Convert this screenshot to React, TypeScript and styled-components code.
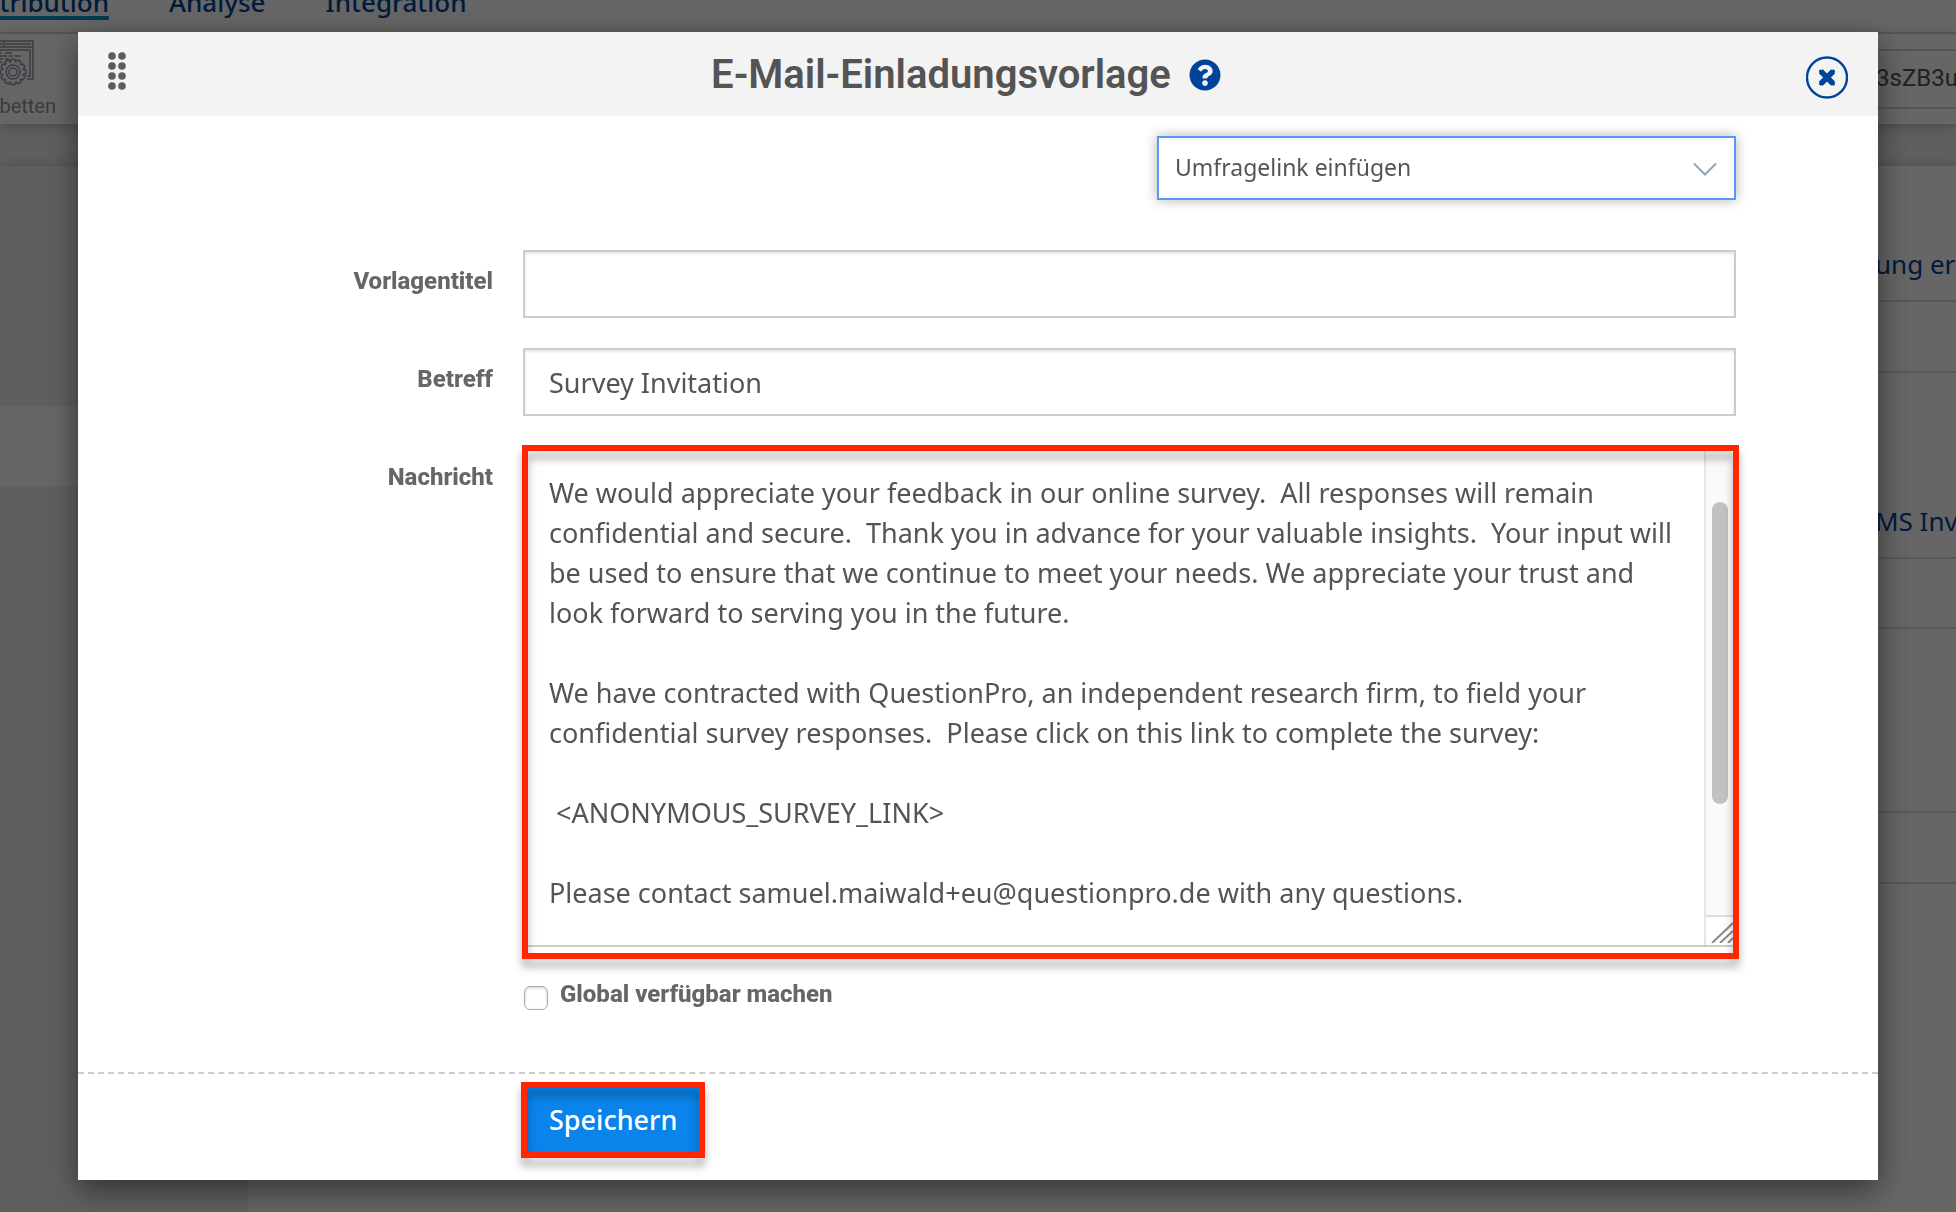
import React, { useId } from "react";
import styled, { createGlobalStyle } from "styled-components";
import { FaQuestionCircle } from "react-icons/fa";

const GlobalStyle = createGlobalStyle`
  *, *::before, *::after { box-sizing: border-box; }
  body {
    margin: 0;
    overflow: hidden;
    background: #eee;
    color: #545454;
    font-family: "Noto Sans", "Open Sans", sans-serif;
    font-weight: 450;
  }
  button, input, select, textarea { font: inherit; color: inherit; }
`;

const navy = "#004499";
const red = "#ff2600";

/* ---------- page behind the dialog ---------- */

const Page = styled.div`
  display: flex;
  flex-direction: column;
  height: 100vh;
  overflow: hidden;
`;

const Nav = styled.nav`
  flex: none;
  display: flex;
  gap: 60px;
  height: 50px;
  margin-top: -16px;
  background: #fff;
  border-bottom: 2px solid #e0e0e0;
`;

const Tab = styled.a<{ $active?: boolean }>`
  display: flex;
  justify-content: flex-end;
  width: ${(p) => (p.$active ? "109px" : "auto")};
  height: 36px;
  overflow: hidden;
  border-bottom: ${(p) => (p.$active ? "4px solid #0095c8" : "0")};
  color: ${navy};
  font-size: 26px;
  font-weight: 500;
  line-height: 36px;
  text-decoration: none;
`;

const Toolbar = styled.div`
  position: relative;
  flex: none;
  display: flex;
  justify-content: space-between;
  align-items: center;
  height: 90px;
  background: #fff;
  box-shadow: 0 2px 12px rgba(0, 0, 0, 0.25);
`;

const Tool = styled.button`
  display: flex;
  flex-direction: column;
  align-items: flex-end;
  gap: 8px;
  width: 56px;
  height: 78px;
  padding: 0;
  overflow: hidden;
  border: 0;
  background: none;
  color: #8f96a3;
  font-family: Roboto, sans-serif;
  font-size: 20px;
  line-height: 24px;

  svg { margin-right: 22px; flex: none; }
`;

const UrlBox = styled.input`
  width: 96px;
  height: 60px;
  padding: 0 0 2px 14px;
  border: 2px solid #d4d4d4;
  border-right: 0;
  background: #fff;
  font-family: Roboto, sans-serif;
  font-size: 24px;
`;

const Body = styled.div`
  flex: 1;
  display: flex;
  margin-top: 42px;
  box-shadow: 0 0 12px rgba(0, 0, 0, 0.2);
`;

const Sidebar = styled.aside`
  width: 248px;
  padding-top: 240px;
  background: #eee;
`;

const SidebarCurrent = styled.div`
  height: 80px;
  background: #fff;
`;

const Panel = styled.main`
  flex: 1;
  display: flex;
  justify-content: flex-end;
  background: #fff;
`;

const List = styled.div`
  width: 96px;
  overflow: hidden;
`;

const ListRow = styled.div<{ $height: number }>`
  display: flex;
  align-items: flex-end;
  height: ${(p) => p.$height}px;
  padding: 0 0 18px 15px;
  border-bottom: 2px solid #dcdcdc;
  color: ${navy};
  font-size: 26px;
  line-height: 36px;
  white-space: nowrap;
`;

/* ---------- dialog ---------- */

const Backdrop = styled.div`
  position: fixed;
  inset: 0;
  padding: 32px 78px;
  background: rgba(0, 0, 0, 0.6);
`;

const Dialog = styled.section`
  background: #fff;
  box-shadow: 0 10px 30px rgba(0, 0, 0, 0.5);
`;

const Header = styled.header`
  display: flex;
  align-items: center;
  height: 84px;
  padding: 0 30px;
  background: #f3f3f3;
`;

const DragHandle = styled.svg`
  flex: none;
  margin-bottom: 6px;
`;

const Title = styled.h1`
  flex: 1;
  display: flex;
  justify-content: center;
  align-items: center;
  gap: 18px;
  margin: 0;
  padding-top: 2px;
  font-family: Roboto, sans-serif;
  font-size: 40px;
  font-weight: 600;
  line-height: 48px;
`;

const IconButton = styled.button<{ $top?: number }>`
  flex: none;
  display: flex;
  margin-top: ${(p) => p.$top ?? 0}px;
  padding: 0;
  border: 0;
  background: none;
  color: ${navy};
  cursor: pointer;
`;

const Form = styled.form`
  padding-top: 20px;
`;

const Fields = styled.div`
  display: flex;
  flex-direction: column;
  gap: 30px;
  padding: 0 142px 62px 0;
`;

const SelectWrap = styled.div`
  position: relative;
  align-self: flex-end;
  width: 579px;
  margin-bottom: 20px;

  svg {
    position: absolute;
    right: 19px;
    top: 26px;
    pointer-events: none;
  }
`;

const Select = styled.select`
  appearance: none;
  display: block;
  width: 100%;
  height: 64px;
  padding: 0 60px 2px 16px;
  border: 2px solid #5897fb;
  border-radius: 0;
  outline: 0;
  background: #fff;
  box-shadow: 0 0 12px rgba(0, 0, 0, 0.3);
  font-size: 23px;
`;

const Field = styled.div`
  display: grid;
  grid-template-columns: 415px 1fr;
  column-gap: 30px;
`;

const Label = styled.label`
  color: #666;
  font-family: Roboto, sans-serif;
  font-size: 24px;
  font-weight: 800;
  line-height: 30px;
`;

const FieldLabel = styled(Label)`
  padding-top: 16px;
  text-align: right;
`;

const TextInput = styled.input`
  width: 100%;
  height: 68px;
  padding: 0 24px;
  border: 2px solid #ccc;
  outline: 0;
  background: #fff;
  box-shadow: inset 0 2px 3px rgba(0, 0, 0, 0.1);
  font-size: 27px;
`;

const Marked = styled.div<{ $frame: string }>`
  position: relative;

  &::after {
    content: "";
    position: absolute;
    inset: ${(p) => p.$frame};
    border: 6px solid ${red};
    filter: drop-shadow(0 8px 4px rgba(0, 0, 0, 0.3));
    pointer-events: none;
  }
`;

const MessageBox = styled.div`
  display: flex;
  height: 501px;
  border: 2px solid #ccc;
  background: #fff;
`;

const Message = styled.textarea`
  flex: 1;
  min-width: 0;
  padding: 25px 12px 0 24px;
  border: 0;
  outline: 0;
  overflow: hidden;
  resize: none;
  background: transparent;
  font-size: 27px;
  line-height: 40px;
`;

const ScrollColumn = styled.div`
  display: flex;
  flex-direction: column;
  width: 30px;
  border-left: 2px solid #e6e6e6;
  background: #fafafa;
`;

const ScrollTrack = styled.div`
  flex: 1;
  padding: 54px 6px 0;
`;

const ScrollThumb = styled.div`
  width: 16px;
  height: 302px;
  border-radius: 8px;
  background: #c1c1c1;
`;

const ResizeCorner = styled.div`
  height: 30px;
  padding: 4px 0 0 5px;
  border-top: 2px solid #dcdcdc;
  background: #fff;
`;

const CheckRow = styled.div`
  display: flex;
  gap: 12px;
  grid-column: 2;
  padding: 2px 0 0 1px;
`;

const Checkbox = styled.input`
  appearance: none;
  width: 24px;
  height: 24px;
  margin: 7px 0 0;
  border: 1px solid #adadad;
  border-radius: 6px;
  background: #fff;
  box-shadow: inset 0 1px 3px rgba(0, 0, 0, 0.2);
`;

const Footer = styled.footer`
  display: flex;
  padding: 10px 0 24px 445px;
  border-top: 2px dashed #ccc;
`;

const SaveButton = styled.button`
  display: block;
  height: 72px;
  padding: 0 26px 2px;
  border: 0;
  background: #0a84eb;
  color: #fff;
  font-size: 27px;
  font-weight: 500;
  cursor: pointer;
`;

const messageText = `We would appreciate your feedback in our online survey.  All responses will remain confidential and secure.  Thank you in advance for your valuable insights.  Your input will be used to ensure that we continue to meet your needs. We appreciate your trust and look forward to serving you in the future.

We have contracted with QuestionPro, an independent research firm, to field your confidential survey responses.  Please click on this link to complete the survey:

 <ANONYMOUS_SURVEY_LINK>

Please contact samuel.maiwald+eu@questionpro.de with any questions.`;

const teeth = Array.from({ length: 12 }, (_, i) => i * 30);

function EmbedIcon() {
  return (
    <svg width="34" height="46" viewBox="0 0 34 46" fill="none" stroke="currentColor" strokeWidth="1.5" aria-hidden="true">
      <path d="M-8 1H33V39H27M-8 7H33M-8 4H3M5 4H31M-8 10H30V36H27M4 1V7" />
      <path d="M-2 13H2M5 13H12M-2 16H7M9 16H13M15 16H21M-2 19H3M5 19H9M-2 22H2" />
      <g transform="translate(13 32)">
        {teeth.map((a) => (
          <path key={a} d="M-2.6-9.8L-1.8-12.8H1.8L2.6-9.8" transform={`rotate(${a})`} />
        ))}
        <circle r="7" />
        <circle r="4" />
      </g>
    </svg>
  );
}

function CloseIcon() {
  return (
    <svg width="42" height="43" viewBox="0 0 42 43" fill="none" stroke="currentColor" aria-hidden="true">
      <circle cx="21" cy="21.5" r="20" strokeWidth="2.4" />
      <path d="M14.8 15.3L27.2 27.7M27.2 15.3L14.8 27.7" strokeWidth="5.6" />
      <path d="M14.8 15.3L27.2 27.7M27.2 15.3L14.8 27.7" strokeWidth="3.6" strokeLinecap="round" />
    </svg>
  );
}

export default function App() {
  const id = useId();
  return (
    <>
      <GlobalStyle />
      <Page>
        <Nav>
          <Tab href="#distribution" $active>Distribution</Tab>
          <Tab href="#analyse">Analyse</Tab>
          <Tab href="#integration">Integration</Tab>
        </Nav>
        <Toolbar>
          <Tool type="button">
            <EmbedIcon />
            Einbetten
          </Tool>
          <UrlBox aria-label="Link" readOnly value="3sZB3ut" />
        </Toolbar>
        <Body>
          <Sidebar>
            <SidebarCurrent />
          </Sidebar>
          <Panel>
            <List>
              <ListRow $height={136}>ung erstellen</ListRow>
              <ListRow $height={71} />
              <ListRow $height={186}>MS Invitation</ListRow>
              <ListRow $height={70} />
              <ListRow $height={184} />
              <ListRow $height={71} />
            </List>
          </Panel>
        </Body>
      </Page>

      <Backdrop>
        <Dialog role="dialog" aria-modal="true" aria-labelledby={`${id}-title`}>
          <Header>
            <DragHandle width="18" height="38" viewBox="0 0 18 38" fill="#5c5c5c" aria-hidden="true">
              {[4, 14, 24, 34].map((y) => (
                <g key={y}>
                  <circle cx="4" cy={y} r="3.8" />
                  <circle cx="14" cy={y} r="3.8" />
                </g>
              ))}
            </DragHandle>
            <Title id={`${id}-title`}>
              E-Mail-Einladungsvorlage
              <IconButton type="button" aria-label="Hilfe">
                <FaQuestionCircle size={32} />
              </IconButton>
            </Title>
            <IconButton type="button" aria-label="Schließen" $top={7}>
              <CloseIcon />
            </IconButton>
          </Header>
          <Form onSubmit={(e) => e.preventDefault()}>
            <Fields>
              <SelectWrap>
                <Select aria-label="Umfragelink einfügen" defaultValue="link">
                  <option value="link">Umfragelink einfügen</option>
                </Select>
                <svg width="24" height="15" viewBox="0 0 24 15" fill="none" stroke="#8fa3bf" strokeWidth="2" aria-hidden="true">
                  <path d="M1 1.5L12 12.5L23 1.5" />
                </svg>
              </SelectWrap>
              <Field>
                <FieldLabel htmlFor={`${id}-name`}>Vorlagentitel</FieldLabel>
                <TextInput id={`${id}-name`} type="text" />
              </Field>
              <Field>
                <FieldLabel htmlFor={`${id}-subject`}>Betreff</FieldLabel>
                <TextInput id={`${id}-subject`} type="text" defaultValue="Survey Invitation" />
              </Field>
              <Field>
                <FieldLabel htmlFor={`${id}-message`}>Nachricht</FieldLabel>
                <Marked $frame="-1px -3px -12px -1px">
                  <MessageBox>
                    <Message id={`${id}-message`} defaultValue={messageText} spellCheck={false} />
                    <ScrollColumn>
                      <ScrollTrack>
                        <ScrollThumb />
                      </ScrollTrack>
                      <ResizeCorner>
                        <svg width="22" height="22" viewBox="0 0 22 22" stroke="#8a8a8a" strokeWidth="2" aria-hidden="true">
                          <path d="M1 22L22 2M9 22L22 10M17 22L22 17" />
                        </svg>
                      </ResizeCorner>
                    </ScrollColumn>
                  </MessageBox>
                </Marked>
              </Field>
              <Field>
                <CheckRow>
                  <Checkbox id={`${id}-global`} type="checkbox" />
                  <Label htmlFor={`${id}-global`}>Global verfügbar machen</Label>
                </CheckRow>
              </Field>
            </Fields>
            <Footer>
              <Marked $frame="-2px">
                <SaveButton type="submit">Speichern</SaveButton>
              </Marked>
            </Footer>
          </Form>
        </Dialog>
      </Backdrop>
    </>
  );
}
